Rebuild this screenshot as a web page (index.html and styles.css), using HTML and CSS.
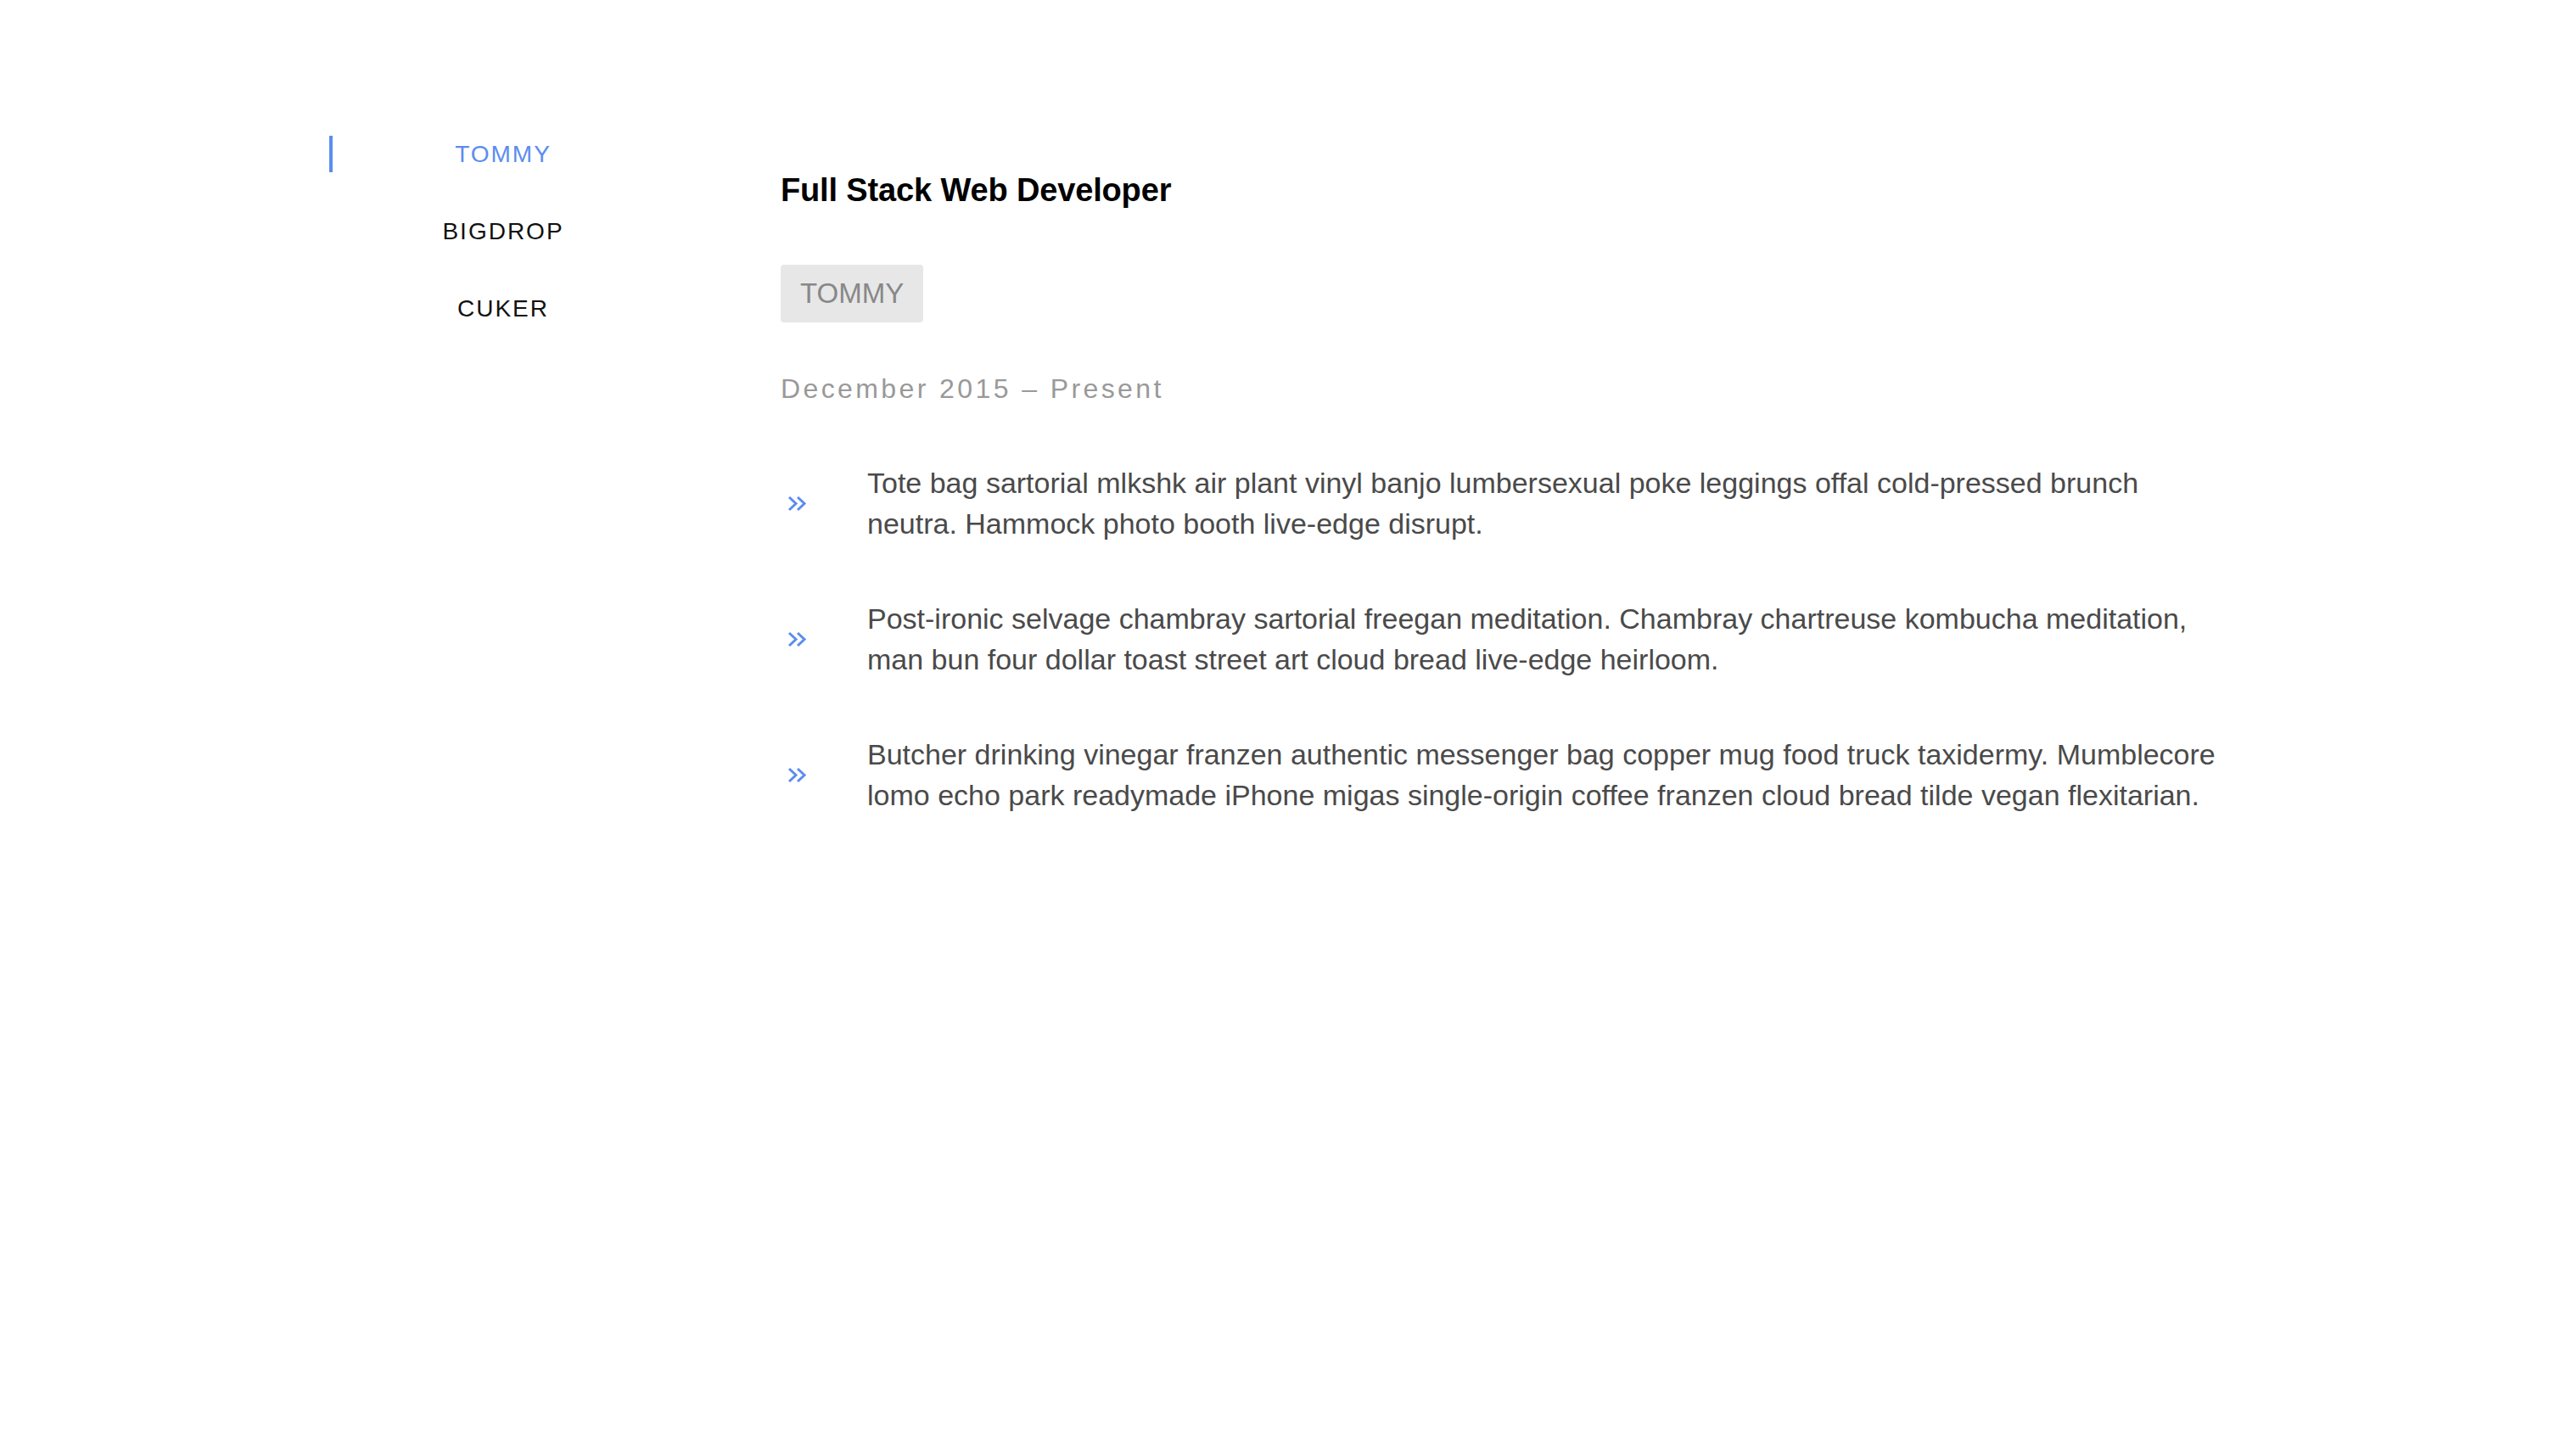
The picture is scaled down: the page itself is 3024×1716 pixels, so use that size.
FILE: index.html
```html
<!DOCTYPE html>
<html lang="en">
<head>
<meta charset="utf-8">
<title>Experience</title>
<link rel="stylesheet" href="styles.css">
</head>
<body>
<div class="page">
  <nav class="sidebar">
    <a class="nav-item active">TOMMY</a>
    <a class="nav-item">BIGDROP</a>
    <a class="nav-item">CUKER</a>
  </nav>
  <main class="content">
    <h1 class="title">Full Stack Web Developer</h1>
    <span class="tag">TOMMY</span>
    <p class="date">December 2015 – Present</p>
    <ul class="points">
      <li class="point">
        <span class="bullet"><svg width="23" height="19" viewBox="0 0 23 19"><polyline points="2,2 10,9.5 2,17" /><polyline points="12,2 20,9.5 12,17" /></svg></span>
        <span class="point-text">Tote bag sartorial mlkshk air plant vinyl banjo lumbersexual poke leggings offal cold-pressed brunch neutra. Hammock photo booth live-edge disrupt.</span>
      </li>
      <li class="point">
        <span class="bullet"><svg width="23" height="19" viewBox="0 0 23 19"><polyline points="2,2 10,9.5 2,17" /><polyline points="12,2 20,9.5 12,17" /></svg></span>
        <span class="point-text">Post-ironic selvage chambray sartorial freegan meditation. Chambray chartreuse kombucha meditation, man bun four dollar toast street art cloud bread live-edge heirloom.</span>
      </li>
      <li class="point">
        <span class="bullet"><svg width="23" height="19" viewBox="0 0 23 19"><polyline points="2,2 10,9.5 2,17" /><polyline points="12,2 20,9.5 12,17" /></svg></span>
        <span class="point-text">Butcher drinking vinegar franzen authentic messenger bag copper mug food truck taxidermy. Mumblecore lomo echo park readymade iPhone migas single-origin coffee franzen cloud bread tilde vegan flexitarian.</span>
      </li>
    </ul>
  </main>
</div>
</body>
</html>
```

FILE: styles.css
```css
html, body {
  margin: 0;
  padding: 0;
  background: #ffffff;
}

body {
  font-family: "Liberation Sans", Arial, sans-serif;
  color: #4a4a4a;
}

.page {
  display: flex;
  align-items: flex-start;
  padding: 160px 0 0 388px;
}

.sidebar {
  width: 406px;
  display: flex;
  flex-direction: column;
  gap: 48px;
}

.nav-item {
  display: block;
  height: 43px;
  line-height: 43px;
  text-align: center;
  font-size: 28px;
  letter-spacing: 2px;
  color: #111111;
  border-left: 4px solid transparent;
  box-sizing: border-box;
  padding-left: 0;
}

.nav-item.active {
  color: #5b8def;
  border-left-color: #5b8def;
}

.content {
  margin-left: 126px;
  padding-top: 40px;
  width: 1720px;
  display: flex;
  flex-direction: column;
  align-items: flex-start;
}

.title {
  margin: 0;
  font-size: 38px;
  line-height: 48px;
  font-weight: 700;
  letter-spacing: -0.15px;
  color: #000000;
}

.tag {
  margin-top: 64px;
  display: inline-block;
  height: 68px;
  line-height: 68px;
  padding: 0 23px;
  font-size: 33px;
  color: #888888;
  background: #e7e7e7;
  border-radius: 4px;
}

.date {
  margin: 58px 0 0 0;
  font-size: 32px;
  line-height: 40px;
  letter-spacing: 3.4px;
  color: #999999;
}

.points {
  list-style: none;
  margin: 67px 0 0 0;
  padding: 0;
  display: flex;
  flex-direction: column;
  gap: 64px;
}

.point {
  display: flex;
  align-items: center;
}

.bullet {
  width: 102px;
  flex: none;
  display: flex;
  padding-left: 8px;
  box-sizing: border-box;
}

.bullet svg {
  display: block;
  fill: none;
  stroke: #5b8def;
  stroke-width: 3;
  stroke-linecap: butt;
  stroke-linejoin: miter;
}

.point-text {
  display: block;
  width: 1594px;
  font-size: 34px;
  line-height: 48px;
  color: #4a4a4a;
}
```
